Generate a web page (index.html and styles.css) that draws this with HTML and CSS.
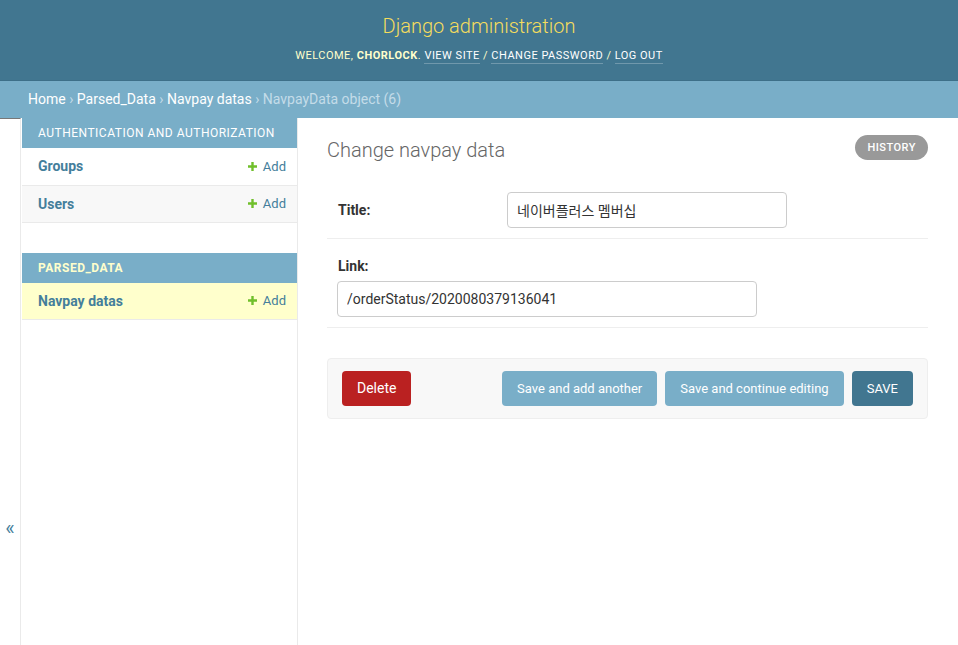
FILE: index.html
```html
<!DOCTYPE html>
<html lang="en">
<head>
<meta charset="utf-8">
<title>Change navpay data | Django site admin</title>
<link rel="stylesheet" href="styles.css">
</head>
<body>
<div class="header">
  <div class="branding">Django administration</div>
  <div class="user-tools">
    Welcome, <strong>chorlock</strong>.
    <a href="#">View site</a> /
    <a href="#">Change password</a> /
    <a href="#">Log out</a>
  </div>
</div>
<div class="breadcrumbs">
  <a href="#">Home</a> › <a href="#">Parsed_Data</a> › <a href="#">Navpay datas</a> › <span class="current">NavpayData object (6)</span>
</div>
<div class="main">
  <button class="toggle-nav">«</button>
  <nav class="sidebar">
    <table class="module">
      <caption>Authentication and Authorization</caption>
      <tr class="row1"><th><a href="#">Groups</a></th><td><a href="#" class="addlink"><svg width="9" height="9" viewBox="0 0 9 9"><path d="M3.3 0h2.4v3.3H9v2.4H5.7V9H3.3V5.7H0V3.3h3.3z" fill="#70bf2b"/></svg>Add</a></td></tr>
      <tr class="row2"><th><a href="#">Users</a></th><td><a href="#" class="addlink"><svg width="9" height="9" viewBox="0 0 9 9"><path d="M3.3 0h2.4v3.3H9v2.4H5.7V9H3.3V5.7H0V3.3h3.3z" fill="#70bf2b"/></svg>Add</a></td></tr>
    </table>
    <table class="module current-app">
      <caption>Parsed_Data</caption>
      <tr class="current-model"><th><a href="#">Navpay datas</a></th><td><a href="#" class="addlink"><svg width="9" height="9" viewBox="0 0 9 9"><path d="M3.3 0h2.4v3.3H9v2.4H5.7V9H3.3V5.7H0V3.3h3.3z" fill="#70bf2b"/></svg>Add</a></td></tr>
    </table>
  </nav>
  <div class="content">
    <div class="title-row">
      <h1>Change navpay data</h1>
      <a href="#" class="history">History</a>
    </div>
    <form class="form">
      <div class="form-row inline">
        <label class="req">Title:</label>
        <input type="text" class="input title-input" value="네이버플러스 멤버십">
      </div>
      <div class="form-row stacked">
        <label class="req">Link:</label>
        <input type="text" class="input link-input" value="/orderStatus/2020080379136041">
      </div>
      <div class="submit-row">
        <a href="#" class="btn delete">Delete</a>
        <div class="right-btns">
          <span class="btn light">Save and add another</span>
          <span class="btn light">Save and continue editing</span>
          <span class="btn default">SAVE</span>
        </div>
      </div>
    </form>
  </div>
</div>
</body>
</html>
```
FILE: styles.css
```css
* { box-sizing: border-box; }
html, body { margin: 0; padding: 0; height: 100%; }
body {
  font-family: Roboto, "Noto Sans CJK KR", "Liberation Sans", sans-serif;
  font-size: 14px;
  color: #333;
  background: #fff;
  display: flex;
  flex-direction: column;
  overflow: hidden;
}
a { text-decoration: none; color: #447e9b; }

.header {
  background: #417690;
  height: 80px;
  padding-top: 14px;
  text-align: center;
  color: #ffc;
  flex: none;
}
.branding {
  font-size: 20px;
  font-weight: 300;
  color: #f5dd5d;
  line-height: 24px;
}
.user-tools {
  margin-top: 8px;
  font-size: 11px;
  letter-spacing: 0.5px;
  text-transform: uppercase;
  line-height: 20px;
  color: #ffc;
}
.user-tools strong { font-weight: 700; }
.user-tools a {
  color: #fff;
  border-bottom: 1px solid rgba(255,255,255,0.25);
  padding-bottom: 1px;
}

.breadcrumbs {
  background: #79aec8;
  border-top: 1px solid #3d6f88;
  height: 38px;
  padding: 9px 28px 0;
  color: #c4dce8;
  font-size: 14px;
  line-height: 18px;
  flex: none;
}
.breadcrumbs a { color: #fff; }
.breadcrumbs .current { color: #c4dce8; }

.main {
  flex: 1;
  display: flex;
  min-height: 0;
}
.toggle-nav {
  flex: 0 0 21px;
  width: 21px;
  border: 0;
  border-right: 1px solid #eaeaea;
  border-top: 1px solid #777;
  background: #fff;
  color: #447e9b;
  font-size: 20px;
  font-family: Roboto, sans-serif;
  padding: 291px 0 0 0;
  margin: 0;
  text-align: center;
  display: block;
  line-height: 20px;
  align-self: stretch;
}
.sidebar {
  flex: 0 0 277px;
  border-right: 1px solid #eaeaea;
  padding: 0 0 0 1px;
}
.module {
  width: 100%;
  border-collapse: collapse;
  margin-bottom: 30px;
}
.module caption {
  background: #79aec8;
  color: #fff;
  text-align: left;
  text-transform: uppercase;
  font-size: 12px;
  letter-spacing: 0.5px;
  font-weight: 400;
  height: 30px;
  line-height: 30px;
  padding: 0 16px;
}
.current-app caption { color: #ffc; font-weight: 700; }
.module tr { height: 37px; border-bottom: 1px solid #eaeaea; }
.module tr.row2 { background: #f8f8f8; }
.module tr.current-model { background: #ffc; }
.module th {
  text-align: left;
  padding: 0 16px;
  font-weight: 700;
  font-size: 14px;
}
.module th a { color: #447e9b; }
.module td {
  text-align: right;
  padding: 0 11px 0 0;
  font-size: 13px;
}
.addlink { color: #447e9b; display: inline-flex; align-items: center; }
.addlink svg { margin-right: 6px; }

.content {
  flex: 1;
  padding: 16px 30px 0 29px;
}
.title-row {
  display: flex;
  justify-content: space-between;
  align-items: flex-start;
}
h1 {
  margin: 4px 0 0;
  font-size: 20px;
  font-weight: 300;
  color: #666;
  line-height: 24px;
}
.history {
  background: #999;
  color: #fff;
  font-size: 11px;
  font-weight: 500;
  letter-spacing: 0.5px;
  text-transform: uppercase;
  border-radius: 15px;
  height: 25px;
  line-height: 25px;
  padding: 0 12px;
  margin-top: 1px;
}
.form { margin-top: 20px; }
.form-row {
  padding: 10px;
  border-bottom: 1px solid #eee;
}
.form-row.inline { display: flex; align-items: center; }
.form-row.inline label { width: 170px; flex: none; padding-left: 1px; }
.form-row label { font-weight: 700; color: #333; font-size: 14px; }
.form-row.stacked label { display: block; padding-left: 1px; margin: 9px 0 6px; line-height: 17px; }
.input {
  height: 36px;
  padding: 6px 9px;
  border: 1px solid #ccc;
  border-radius: 4px;
  font-family: Roboto, "Noto Sans CJK KR", sans-serif;
  font-size: 14px;
  color: #333;
  background: #fff;
  display: block;
}
.title-input { width: 280px; }
.link-input { width: 420px; }

.submit-row {
  margin-top: 30px;
  background: #f8f8f8;
  border: 1px solid #eee;
  border-radius: 4px;
  padding: 12px 14px;
  display: flex;
  justify-content: space-between;
}
.right-btns { display: flex; gap: 8px; }
.btn {
  display: block;
  height: 35px;
  line-height: 35px;
  padding: 0 15px;
  border-radius: 4px;
  color: #fff;
  font-size: 14px;
}
.btn.delete { background: #ba2121; }
.btn.light { background: #79aec8; font-size: 13px; }
.btn.default { background: #417690; font-size: 13px; }
```
